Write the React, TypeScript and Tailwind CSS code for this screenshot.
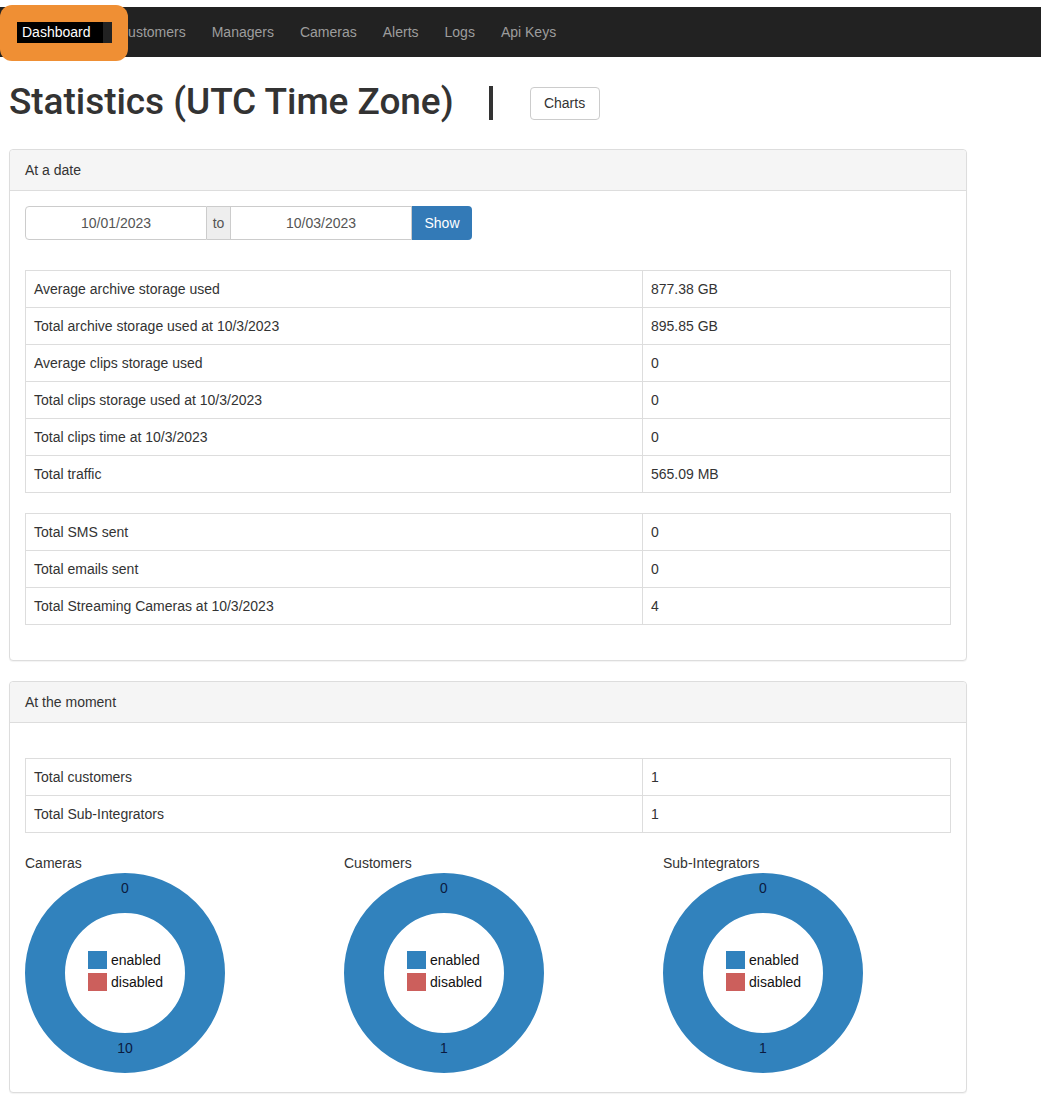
import React from 'react';

const FONT = { fontFamily: '"Liberation Sans", Arial, Helvetica, sans-serif' };

const navLinks = ['Customers', 'Managers', 'Cameras', 'Alerts', 'Logs', 'Api Keys'];

const storageRows: [string, string][] = [
    ['Average archive storage used', '877.38 GB'],
    ['Total archive storage used at 10/3/2023', '895.85 GB'],
    ['Average clips storage used', '0'],
    ['Total clips storage used at 10/3/2023', '0'],
    ['Total clips time at 10/3/2023', '0'],
    ['Total traffic', '565.09 MB'],
];

const notifyRows: [string, string][] = [
    ['Total SMS sent', '0'],
    ['Total emails sent', '0'],
    ['Total Streaming Cameras at 10/3/2023', '4'],
];

const momentRows: [string, string][] = [
    ['Total customers', '1'],
    ['Total Sub-Integrators', '1'],
];

const donuts = [
    { title: 'Cameras', top: '0', bottom: '10' },
    { title: 'Customers', top: '0', bottom: '1' },
    { title: 'Sub-Integrators', top: '0', bottom: '1' },
];

function StatTable({ rows, className = '' }: { rows: [string, string][]; className?: string }) {
    return (
        <table className={`w-full border-collapse border border-[#ddd] text-[14px] text-[#333] ${className}`}>
            <tbody>
                {rows.map(([label, value]) => (
                    <tr key={label}>
                        <td className="w-[617px] border border-[#ddd] px-2 py-2 leading-5">{label}</td>
                        <td className="border border-[#ddd] px-2 py-2 leading-5">{value}</td>
                    </tr>
                ))}
            </tbody>
        </table>
    );
}

function Panel({ title, children }: { title: string; children: React.ReactNode }) {
    return (
        <div className="w-[958px] rounded border border-[#ddd] bg-white shadow-[0_1px_1px_rgba(0,0,0,0.05)]">
            <div className="h-[41px] rounded-t border-b border-[#ddd] bg-[#f5f5f5] px-[15px] flex items-center text-[14px] text-[#333]">
                {title}
            </div>
            <div className="p-[15px]">{children}</div>
        </div>
    );
}

function Donut({ title, top, bottom }: { title: string; top: string; bottom: string }) {
    return (
        <div className="w-[319px] shrink-0">
            <div className="text-[14px] text-[#333] leading-5">{title}</div>
            <svg width="200" height="200" viewBox="0 0 200 200" className="block">
                <circle cx="100" cy="100" r="80" fill="none" stroke="#3182bd" strokeWidth="40" />
                <text x="100" y="20" textAnchor="middle" fontSize="14" fill="#0b1b3f" style={FONT}>
                    {top}
                </text>
                <text x="100" y="180" textAnchor="middle" fontSize="14" fill="#0b1b3f" style={FONT}>
                    {bottom}
                </text>
                <rect x="63" y="78" width="19" height="18" fill="#3182bd" />
                <rect x="63" y="100" width="19" height="18" fill="#cc5f5c" />
                <text x="86" y="92" fontSize="14" fill="#111" style={FONT}>
                    enabled
                </text>
                <text x="86" y="114" fontSize="14" fill="#111" style={FONT}>
                    disabled
                </text>
            </svg>
        </div>
    );
}

function App() {
    return (
        <div className="min-h-screen bg-white pt-[7px]" style={FONT}>
            {/* Navbar */}
            <nav className="relative h-[50px] bg-[#222] flex items-center pl-[17px]">
                <div className="relative z-10 flex h-[21px] w-[95px] bg-black">
                    <span className="pl-[5px] text-[14px] leading-[21px] text-white">Dashboard</span>
                    <span className="ml-auto w-[9px] bg-[#222]" />
                </div>
                <div className="ml-[6px] flex gap-[26px] text-[14px] text-[#9d9d9d]">
                    {navLinks.map((l) => (
                        <span key={l}>{l}</span>
                    ))}
                </div>
                {/* highlight annotation */}
                <div className="absolute left-0 top-[-2px] h-[56px] w-[128px] rounded-[12px] bg-[#ef8f34]" />
            </nav>

            <div className="px-[9px]">
                {/* Title */}
                <div className="flex items-center h-[92px] pb-[3px]">
                    <h1
                        className="text-[37px] leading-none text-[#333] font-medium tracking-[-0.05px]"
                        style={{ fontFamily: 'Roboto, "Liberation Sans", Arial, sans-serif' }}
                    >
                        Statistics (UTC Time Zone)
                    </h1>
                    <span className="ml-[35px] mt-[3px] h-[34px] w-[4px] bg-[#333]" />
                    <button className="ml-[37px] mt-[3px] h-[33px] w-[70px] rounded border border-[#ccc] bg-white text-[14px] text-[#333]">
                        Charts
                    </button>
                </div>

                <Panel title="At a date">
                    <div className="flex h-[34px] w-[447px] text-[14px] text-[#555]">
                        <div className="flex w-[182px] items-center justify-center rounded-l border border-[#ccc]">
                            10/01/2023
                        </div>
                        <div className="flex w-[23px] items-center justify-center border-y border-[#ccc] bg-[#eee]">
                            to
                        </div>
                        <div className="flex w-[182px] items-center justify-center border border-[#ccc]">
                            10/03/2023
                        </div>
                        <button className="w-[60px] rounded-r bg-[#337ab7] text-white">Show</button>
                    </div>
                    <StatTable rows={storageRows} className="mt-[30px] mb-5" />
                    <StatTable rows={notifyRows} className="mb-5" />
                </Panel>

                <div className="h-5" />

                <Panel title="At the moment">
                    <div className="h-5" />
                    <StatTable rows={momentRows} className="mb-5" />
                    <div className="flex mb-[4px]">
                        {donuts.map((d) => (
                            <Donut key={d.title} {...d} />
                        ))}
                    </div>
                </Panel>
                <div className="h-4" />
            </div>
        </div>
    );
}

export default App;
